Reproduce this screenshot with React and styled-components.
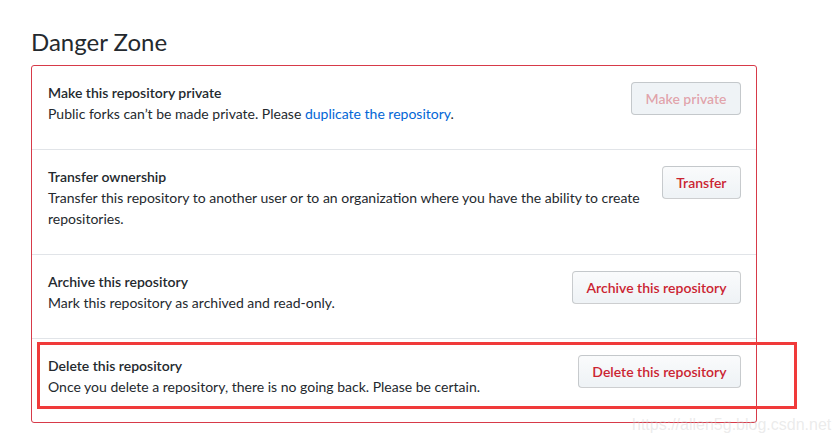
import React from 'react'
import styled, { createGlobalStyle } from 'styled-components'

const GlobalStyle = createGlobalStyle`
  html, body {
    margin: 0;
    padding: 0;
    background: #fff;
  }
  body {
    font-family: "Segoe UI", Lato, "Noto Sans", sans-serif;
    font-size: 14px;
    line-height: 1.5;
    color: #24292e;
  }
`

const Page = styled.div`
  position: relative;
  width: 840px;
  height: 444px;
  padding: 27px 0 0 31px;
  box-sizing: border-box;
  overflow: hidden;
`

const Heading = styled.h2`
  margin: 0 0 8px;
  font-size: 24px;
  font-weight: 400;
  line-height: 30px;
  color: #24292e;
`

const DangerBox = styled.div`
  position: relative;
  width: 726px;
  box-sizing: border-box;
  border: 1px solid #d73a49;
  border-radius: 3px;
`

const Row = styled.div`
  display: flex;
  align-items: flex-start;
  gap: 16px;
  padding: 16px 15px 25px 16px;
  & + & {
    border-top: 1px solid #e1e4e8;
  }
`

const RowText = styled.div`
  flex: 1;
  min-width: 0;
`

const RowTitle = styled.div`
  font-weight: 600;
  line-height: 21px;
`

const RowDesc = styled.p`
  margin: 0;
  line-height: 21px;
`

const Link = styled.a`
  color: #0366d6;
  text-decoration: none;
`

const DangerButton = styled.button`
  flex: none;
  height: 33px;
  padding: 0 13.5px;
  font-family: inherit;
  font-size: 14px;
  font-weight: 600;
  line-height: 20px;
  color: #cb2431;
  background: linear-gradient(-180deg, #fafbfc 0%, #eff3f6 90%);
  border: 1px solid rgba(27, 31, 35, 0.2);
  border-radius: 4px;
  white-space: nowrap;
  cursor: pointer;
  &:disabled {
    color: rgba(203, 36, 49, 0.4);
    background: #eff3f6;
    cursor: default;
  }
`

const Highlight = styled.div`
  position: absolute;
  left: 5px;
  top: 276px;
  width: 760px;
  height: 67px;
  box-sizing: border-box;
  border: 3px solid #f03a3a;
  pointer-events: none;
`

const Watermark = styled.div`
  position: absolute;
  left: 632px;
  top: 415px;
  font-family: "Liberation Sans", Arial, sans-serif;
  font-size: 16px;
  line-height: 20px;
  color: rgba(205, 205, 205, 0.4);
  white-space: nowrap;
`

export default function App() {
  const rows = [
    {
      title: 'Make this repository private',
      desc: (
        <>
          Public forks can’t be made private. Please <Link href="#">duplicate the repository</Link>.
        </>
      ),
      action: 'Make private',
      disabled: true,
    },
    {
      title: 'Transfer ownership',
      desc: 'Transfer this repository to another user or to an organization where you have the ability to create repositories.',
      action: 'Transfer',
    },
    {
      title: 'Archive this repository',
      desc: 'Mark this repository as archived and read-only.',
      action: 'Archive this repository',
    },
    {
      title: 'Delete this repository',
      desc: 'Once you delete a repository, there is no going back. Please be certain.',
      action: 'Delete this repository',
    },
  ]

  return (
    <Page>
      <GlobalStyle />
      <Heading>Danger Zone</Heading>
      <DangerBox>
        {rows.map((r) => (
          <Row key={r.title}>
            <RowText>
              <RowTitle>{r.title}</RowTitle>
              <RowDesc>{r.desc}</RowDesc>
            </RowText>
            <DangerButton disabled={r.disabled}>{r.action}</DangerButton>
          </Row>
        ))}
        <Highlight />
      </DangerBox>
      <Watermark>https://allen5g.blog.csdn.net</Watermark>
    </Page>
  )
}
